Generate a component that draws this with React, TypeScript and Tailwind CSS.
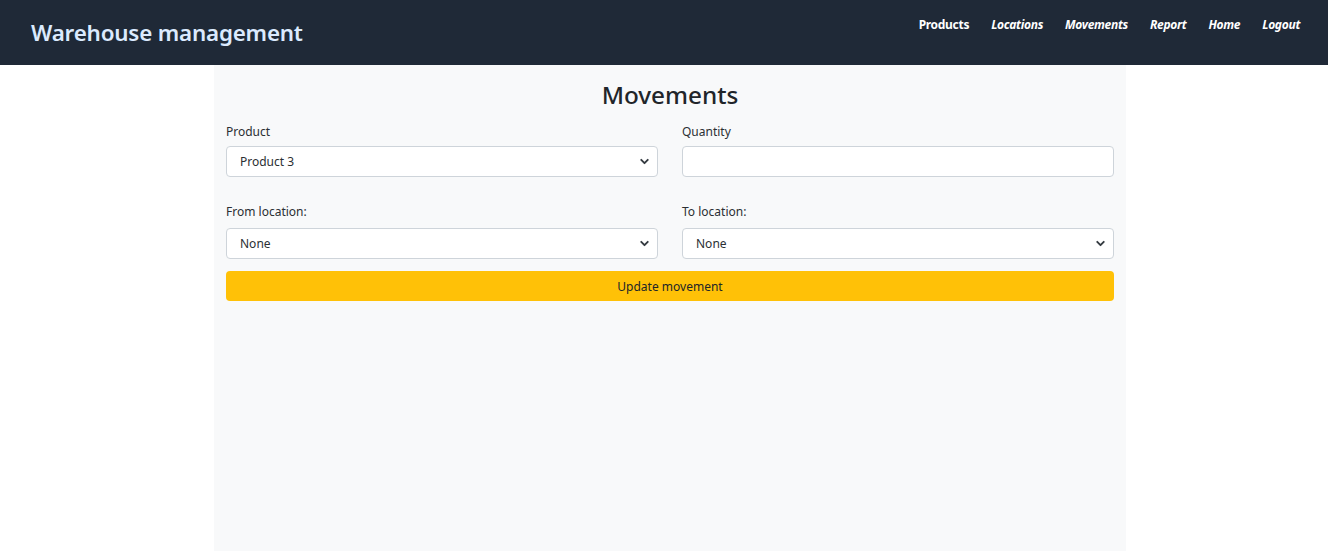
import { ChevronDown } from 'lucide-react';

const links = [
  { label: 'Products', italic: false },
  { label: 'Locations', italic: true },
  { label: 'Movements', italic: true },
  { label: 'Report', italic: true },
  { label: 'Home', italic: true },
  { label: 'Logout', italic: true },
];

function Select({ value }: { value: string }) {
  return (
    <div className="relative h-[31px] w-full rounded-[4px] border border-[#ced4da] bg-white">
      <div className="flex h-full items-center pl-[13px] text-[12px] text-[#2b2f33]">{value}</div>
      <ChevronDown className="absolute right-[6px] top-[8px] h-[13px] w-[13px] text-[#343a40]" strokeWidth={3.5} />
    </div>
  );
}

export default function App() {
  return (
    <div className="min-h-[551px] bg-white font-['Noto_Sans',sans-serif]">
      {/* Navbar */}
      <header className="flex h-[65px] items-center justify-between bg-[#1f2937] pl-[31px] pr-[28px]">
        <h1 className="text-[22.4px] font-semibold text-[#dbeafe] tracking-[-0.2px]">Warehouse management</h1>
        <nav className="-mt-[16px] flex gap-[22px]">
          {links.map(l => (
            <a
              key={l.label}
              className={`text-[12px] font-bold tracking-[-0.3px] text-white ${l.italic ? 'italic' : ''}`}
            >
              {l.label}
            </a>
          ))}
        </nav>
      </header>

      <main className="ml-[214px] h-[486px] w-[912px] bg-[#f8f9fa] px-[12px]">
        <h2 className="pt-[13px] text-center text-[24.3px] font-medium leading-[34px] text-[#212529]">Movements</h2>

        <div className="mt-[11px] grid grid-cols-2 gap-x-[24px]">
          <div>
            <label className="block text-[12px] leading-[18px] text-[#2b2f33]">Product</label>
            <div className="mt-[5px]">
              <Select value="Product 3" />
            </div>
          </div>
          <div>
            <label className="block text-[12px] leading-[18px] text-[#2b2f33]">Quantity</label>
            <div className="mt-[5px] h-[31px] w-full rounded-[4px] border border-[#ced4da] bg-white" />
          </div>
        </div>

        <div className="mt-[26px] grid grid-cols-2 gap-x-[24px]">
          <div>
            <label className="block text-[12px] leading-[18px] text-[#2b2f33]">From location:</label>
            <div className="mt-[7px]">
              <Select value="None" />
            </div>
          </div>
          <div>
            <label className="block text-[12px] leading-[18px] text-[#2b2f33]">To location:</label>
            <div className="mt-[7px]">
              <Select value="None" />
            </div>
          </div>
        </div>

        <button className="mt-[12px] flex h-[30px] w-full items-center justify-center rounded-[4px] bg-[#ffc107] pt-[2px] text-[12px] text-[#212529]">
          Update movement
        </button>
      </main>
    </div>
  );
}
